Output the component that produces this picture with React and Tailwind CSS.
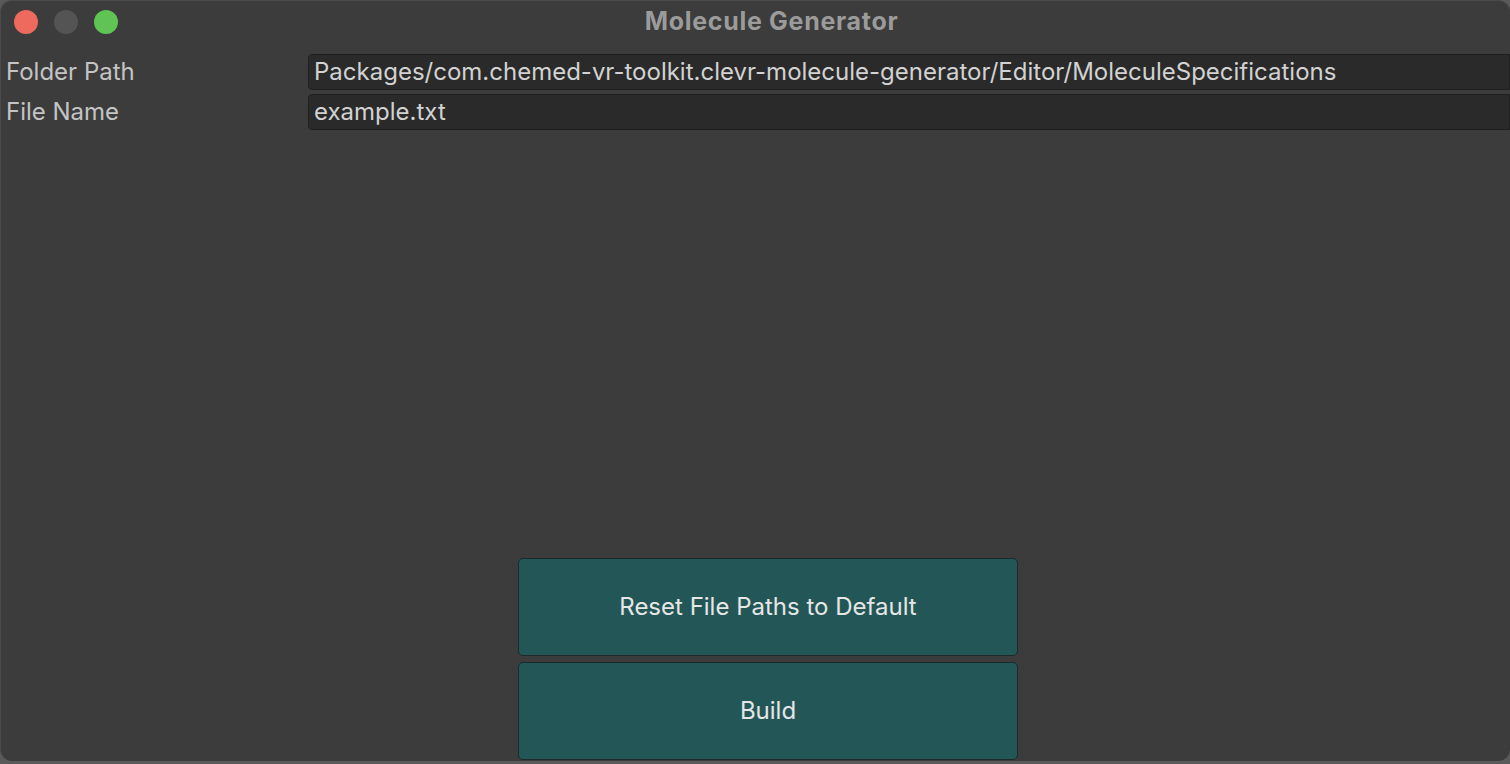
export default function App() {
  return (
    <div className="w-[1510px] h-[764px] bg-[#5a5a5a] overflow-hidden" style={{ fontFamily: 'Inter, "Noto Sans", sans-serif' }}>
      <div className="h-[761px] bg-[#3c3c3c] rounded-[12px] flex flex-col border-l border-t border-[#4a4a4a]">
        {/* Barra de título */}
        <div className="h-[42px] flex items-center relative shrink-0">
          <div className="flex items-center gap-[16px] pl-[13px]">
            <span className="w-[24px] h-[24px] rounded-full bg-[#ee6a5e]" />
            <span className="w-[24px] h-[24px] rounded-full bg-[#545454]" />
            <span className="w-[24px] h-[24px] rounded-full bg-[#5fc454]" />
          </div>
          <div className="absolute inset-0 flex items-center justify-center pl-[32px] pointer-events-none">
            <span className="text-[25px] font-bold text-[#9b9b9b] tracking-[0.7px]">Molecule Generator</span>
          </div>
        </div>

        {/* Campos */}
        <div className="flex flex-col gap-[4px] pt-[11px]">
          <div className="flex items-center h-[36px]">
            <label className="w-[307px] pl-[5px] text-[24px] text-[#c4c4c4]">Folder Path</label>
            <div className="flex-1 h-[36px] bg-[#2a2a2a] border border-[#1f1f1f] rounded-l-[4px] flex items-center pl-[5px] text-[24px] text-[#d2d2d2]">
              Packages/com.chemed-vr-toolkit.clevr-molecule-generator/Editor/MoleculeSpecifications
            </div>
          </div>
          <div className="flex items-center h-[36px]">
            <label className="w-[307px] pl-[5px] text-[24px] text-[#c4c4c4]">File Name</label>
            <div className="flex-1 h-[36px] bg-[#2a2a2a] border border-[#1f1f1f] rounded-l-[4px] flex items-center pl-[5px] text-[24px] text-[#d2d2d2]">
              example.txt
            </div>
          </div>
        </div>

        <div className="flex-1" />

        {/* Botones */}
        <div className="flex flex-col items-stretch gap-[6px] pb-[1px] pl-[517px] pr-[492px]">
          <button className="h-[98px] bg-[#235757] border border-[#1e2a2a] rounded-[5px] text-[24px] text-[#e6e6e6]">
            Reset File Paths to Default
          </button>
          <button className="h-[98px] bg-[#235757] border border-[#1e2a2a] rounded-[5px] text-[24px] text-[#e6e6e6]">
            Build
          </button>
        </div>
      </div>
    </div>
  )
}
